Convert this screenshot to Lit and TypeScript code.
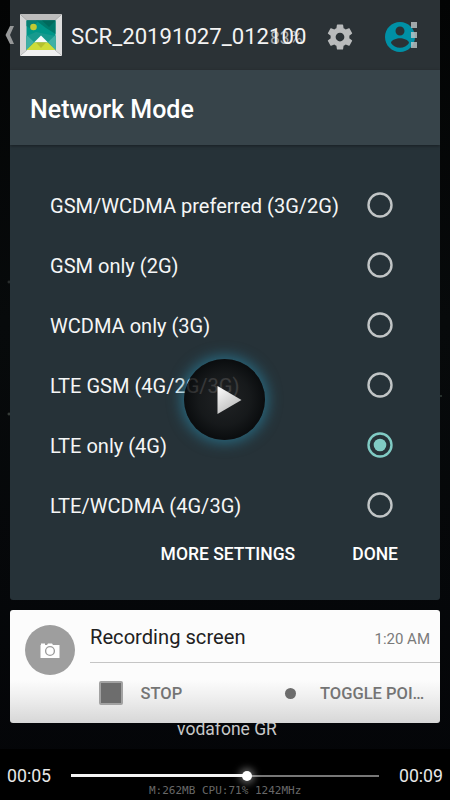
import { LitElement, html, css, svg } from "lit";
import { customElement, property } from "lit/decorators.js";
import { classMap } from "lit/directives/class-map.js";

@customElement("network-panel")
class NetworkPanel extends LitElement {
  @property({ type: Number }) selected = 4;

  private modes = [
    "GSM/WCDMA preferred (3G/2G)",
    "GSM only (2G)",
    "WCDMA only (3G)",
    "LTE GSM (4G/2G/3G)",
    "LTE only (4G)",
    "LTE/WCDMA (4G/3G)",
  ];

  static styles = css`
    :host { display: flex; flex-direction: column; height: 600px; background: #263238; border-radius: 0 0 3px 3px; overflow: hidden; color: #fff; }
    .status { height: 70px; box-sizing: border-box; background: #2b3236; display: flex; align-items: center; padding: 4px 25px 0 0; justify-content: flex-end; }
    .battery { font-size: 17.5px; color: #a6a9aa; width: 55px; white-space: nowrap; padding-top: 2px; }
    .gear { width: 30px; height: 30px; margin-right: 27px; }
    .user { width: 36px; height: 36px; margin-right: -3px; }
    .title { height: 75px; line-height: 80px; background: #37444a; padding-left: 20px; font-size: 25px; font-weight: 500; box-shadow: 0 1px 3px rgba(0, 0, 0, 0.4); }
    .modes { padding-top: 30px; }
    .mode { height: 60px; display: flex; align-items: center; justify-content: space-between; padding: 0 47px 0 40px; font-size: 20.04px; color: #f5f6f6; }
    .mode span { padding-top: 2px; }
    .radio { width: 26px; height: 26px; fill: none; stroke: #c1c5c6; stroke-width: 2.4; }
    .radio circle + circle { display: none; }
    .radio.on { stroke: #80cbc4; }
    .radio.on circle + circle { display: inline; fill: #80cbc4; stroke: none; }
    .actions { display: flex; justify-content: flex-end; gap: 57px; padding: 8px 42px 0 0; font-size: 17.5px; line-height: 22px; font-weight: 500; }
  `;

  render() {
    return html`
      <div class="status">
        <span class="battery">83%</span>
        <svg class="gear" viewBox="0 0 24 24"><path fill="#b9bbbc" d="M19.43 12.98c.04-.32.07-.64.07-.98s-.03-.66-.07-.98l2.11-1.65c.19-.15.24-.42.12-.64l-2-3.46c-.12-.22-.39-.3-.61-.22l-2.49 1c-.52-.4-1.08-.73-1.69-.98l-.38-2.65C14.46 2.18 14.25 2 14 2h-4c-.25 0-.46.18-.49.42l-.38 2.65c-.61.25-1.17.59-1.69.98l-2.49-1c-.23-.09-.49 0-.61.22l-2 3.46c-.13.22-.07.49.12.64l2.11 1.65c-.04.32-.07.65-.07.98s.03.66.07.98l-2.11 1.65c-.19.15-.24.42-.12.64l2 3.46c.12.22.39.3.61.22l2.49-1c.52.4 1.08.73 1.69.98l.38 2.65c.03.24.24.42.49.42h4c.25 0 .46-.18.49-.42l.38-2.65c.61-.25 1.17-.59 1.69-.98l2.49 1c.23.09.49 0 .61-.22l2-3.46c.12-.22.07-.49-.12-.64l-2.11-1.65zM12 15.5c-1.93 0-3.5-1.57-3.5-3.5s1.57-3.5 3.5-3.5 3.5 1.57 3.5 3.5-1.57 3.5-3.5 3.5z"/></svg>
        <svg class="user" viewBox="0 0 24 24"><path fill="#0090a6" d="M12 2C6.48 2 2 6.48 2 12s4.48 10 10 10 10-4.48 10-10S17.52 2 12 2zm0 3c1.66 0 3 1.34 3 3s-1.34 3-3 3-3-1.34-3-3 1.34-3 3-3zm0 14.200c-2.500 0-4.710-1.280-6-3.220.030-1.990 4-3.080 6-3.080 1.990 0 5.970 1.090 6 3.080-1.290 1.940-3.500 3.220-6 3.220z"/></svg>
      </div>
      <div class="title">Network Mode</div>
      <div class="modes">
        ${this.modes.map(
          (m, i) => html`<div class="mode"><span>${m}</span><svg class=${classMap({ radio: true, on: i === this.selected })} viewBox="0 0 26 26"><circle cx="13" cy="13" r="11.500"/><circle cx="13" cy="13" r="6.300"/></svg></div>`
        )}
      </div>
      <div class="actions"><span>MORE SETTINGS</span><span>DONE</span></div>
    `;
  }
}

@customElement("recording-card")
class RecordingCard extends LitElement {
  static styles = css`
    :host { display: flex; height: 113px; box-sizing: border-box; border-radius: 3px; overflow: hidden; padding: 15px 0 0 15px; background: linear-gradient(#fcfcfc 0 62%, #f0f0f0 76%, #d7d7d7); position: relative; z-index: 1; }
    .badge { width: 50px; height: 50px; border-radius: 50%; background: #9e9e9e; display: flex; align-items: center; justify-content: center; flex: none; }
    .badge svg { width: 20px; height: 17px; }
    .body { flex: 1; margin-left: 15px; }
    .head { height: 37px; border-bottom: 1px solid #c5c5c5; display: flex; justify-content: space-between; padding-right: 10px; color: #212121; font-size: 20.15px; line-height: 25px; }
    .time { font-size: 15px; line-height: 28px; color: #7a7a7a; }
    .actions { display: flex; align-items: center; height: 60px; font-size: 16.5px; font-weight: 500; color: #747474; }
    .actions span { padding-top: 1px; }
    .stop { width: 24px; height: 24px; box-sizing: border-box; border: 2px solid #a2a2a2; border-radius: 2px; background: #6d6d6d; margin: 0 17.5px 0 9px; }
    .label { width: 144px; }
    .dot { width: 11px; height: 11px; border-radius: 50%; background: #6c6c6c; margin-right: 24.5px; }
  `;

  render() {
    return html`
      <div class="badge"><svg viewBox="0 0 20 17"><path fill="#fff" d="M.5 3H1V1.500H5V3H7L8 1.500H12L13 3H19.500V16H.5Z"/><circle cx="10" cy="9" r="4.400" fill="#fff" stroke="#9e9e9e" stroke-width="1.400"/></svg></div>
      <div class="body">
        <div class="head"><span>Recording screen</span><span class="time">1:20 AM</span></div>
        <div class="actions"><i class="stop"></i><span class="label">STOP</span><i class="dot"></i><span>TOGGLE POI…</span></div>
      </div>
    `;
  }
}

@customElement("player-overlay")
class PlayerOverlay extends LitElement {
  @property({ type: Number }) progress = 57;

  static styles = css`
    :host { display: flex; flex-direction: column; }
    .bar { height: 70px; box-sizing: border-box; display: flex; align-items: center; padding-left: 5px; color: #fff; }
    .back { width: 10px; height: 20px; margin-right: 5px; }
    .frame { width: 42px; height: 42px; margin-right: 9px; }
    .name { font-size: 22.15px; width: 340px; padding-top: 1px; color: #f3f3f3; }
    .more { display: flex; flex-direction: column; gap: 3.600px; }
    .more i { width: 6px; height: 6px; background: rgba(190, 197, 200, 0.8); }
    .center { flex: 1; display: flex; align-items: center; justify-content: center; padding: 0 1px 21px 0; }
    .play { width: 81px; height: 81px; border-radius: 50%; background: radial-gradient(rgba(31, 32, 33, 0.84), rgba(19, 20, 21, 0.84) 45%, rgba(5, 6, 7, 0.87) 72%); box-shadow: 0 0 14px 3px rgba(42, 132, 164, 0.68); }
    .controls { height: 51px; background: #000; display: flex; align-items: center; padding: 2px 7px 0; box-sizing: border-box; color: #e8e8e8; font-size: 17.7px; }
    .time { width: 63px; }
    .end { text-align: right; }
    .track { flex: 1; height: 2px; margin: 0 1px; background: #777; display: flex; align-items: center; }
    .fill { height: 3px; background: #f4f4f4; }
    .thumb { width: 10px; height: 10px; margin: 0 -5px; border-radius: 50%; background: #fff; box-shadow: 0 0 7px 3px rgba(255, 255, 255, 0.35); flex: none; }
  `;

  render() {
    return html`
      <div class="bar">
        <svg class="back" viewBox="0 0 10 20"><path d="M5 1H9L5 10L9 19H5L.5 10Z" fill="#969899"/></svg>
        <svg class="frame" viewBox="0 0 42 42">
          <path fill="#bcbcbc" d="M0 0H42L35 6.500H7Z"/><path fill="#d5d5d5" d="M0 0L7 6.500V36L0 42Z"/><path fill="#dedede" d="M42 0L35 6.500V36L42 42Z"/><path fill="#f1f1f1" d="M0 42L7 36H35L42 42Z"/>
          ${svg`<path fill="#009688" d="M6.500 6.500H35.500V36H6.500Z"/><path fill="#00796b" d="M16 6.500H35.500V20L26 14Z"/><path fill="#00695c" d="M22 6.500H35.500L29 13Z"/><path fill="#087f73" d="M6.500 6.500H19L11 15L6.500 12Z"/><path fill="#179a8e" d="M6.500 22L16 18L35.500 22V36H6.500Z"/><path fill="#3fb0a5" d="M6.500 21L14 28L6.500 36ZM35.500 21L28 28L35.500 36Z"/><path fill="#f7fbfb" d="M14 28.500L21 21.500L28 28.500Z"/><path fill="#cddc39" d="M6.500 36L14 28.500H28L35.500 36Z"/><path fill="#b5bf2e" d="M16 28.500H26L21 34Z"/><circle cx="13.500" cy="13" r="3.300" fill="#c0ca33"/>`}
        </svg>
        <span class="name">SCR_20191027_012100</span>
        <span class="more"><i></i><i></i><i></i></span>
      </div>
      <div class="center">
        <svg class="play" viewBox="0 0 81 81">
          <defs><linearGradient id="g" x1="0" y1="0" x2="0.600" y2="1"><stop stop-color="#fff"/><stop offset="1" stop-color="#b9b9b9"/></linearGradient></defs>
          <path d="M33.500 27V55L57.500 41Z" fill="url(#g)"/>
        </svg>
      </div>
      <div class="controls">
        <span class="time">00:05</span>
        <div class="track"><div class="fill" style="width:${this.progress}%"></div><i class="thumb"></i></div>
        <span class="time end">00:09</span>
      </div>
    `;
  }
}

@customElement("app-root")
class AppRoot extends LitElement {
  static styles = css`
    :host { display: block; position: relative; width: 450px; height: 800px; overflow: hidden; background: radial-gradient(circle 2px at 9px 282px, #3b403f, transparent), radial-gradient(circle 2px at 9px 414px, #505852, transparent), radial-gradient(circle 1.500px at 441px 396px, #435249, transparent), linear-gradient(#030404, #070a0b 40%, #040508); font-family: Roboto, "Noto Sans", sans-serif; }
    .screen { display: flex; flex-direction: column; padding: 0 10px; gap: 10px; }
    .carrier { align-self: center; margin: -15px 0 0 4px; font-size: 17.500px; line-height: 22px; color: #c8c8c8; }
    .overlay { position: absolute; inset: 0; z-index: 2; }
    .stats { position: absolute; z-index: 3; left: 149px; top: 784px; font: 11px/14px "DejaVu Sans Mono", monospace; color: #686868; white-space: pre; }
  `;

  render() {
    return html`
      <div class="screen">
        <network-panel></network-panel>
        <recording-card></recording-card>
        <span class="carrier">vodafone GR</span>
      </div>
      <player-overlay class="overlay"></player-overlay>
      <span class="stats">M:262MB CPU:71% 1242MHz</span>
    `;
  }
}
